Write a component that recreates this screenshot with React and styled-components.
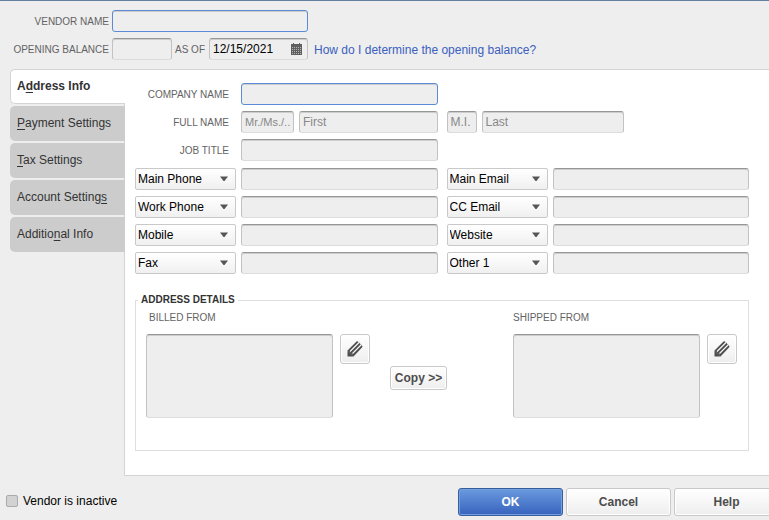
import React, { Component } from 'react'
import styled, { createGlobalStyle, css } from 'styled-components'

const Color = {
  window: '#eeeeee',
  panel: '#ffffff',
  tab: '#cccccc',
  line: '#d4d4d4',
  label: '#636363',
  text: '#000000',
  dark: '#333333',
  focus: '#5b8bd6',
  link: '#3a60c0',
}

const GlobalStyle = createGlobalStyle`
  * {
    box-sizing: border-box;
  }
  body {
    margin: 0;
    overflow-x: hidden;
    background: ${Color.window};
  }
  body, button, input, select, textarea {
    font-family: "Liberation Sans", Arial, sans-serif;
    font-size: 12px;
  }
`

const Window = styled.form`
  min-height: 100vh;
  display: flex;
  flex-direction: column;
  border-top: 1px solid #64809e;
  color: ${Color.text};
`

const Header = styled.header`
  display: flex;
  flex-direction: column;
  gap: 6px;
  padding: 9px 0;
`

const HeaderRow = styled.div`
  display: flex;
  align-items: center;
  gap: 3px;
`

const Label = styled.label`
  flex: none;
  width: ${props => props.$width || 'auto'};
  padding-top: 2px;
  padding-right: ${props => props.$gap || '0'};
  font-size: 10px;
  line-height: 14px;
  text-align: right;
  white-space: nowrap;
  color: ${Color.label};
`

const sunken = css`
  min-width: 0;
  border: 1px solid #c2c2c2;
  border-top-color: #969696;
  border-bottom-color: #dcdcdc;
  border-radius: 3px;
  background: ${Color.window};
  box-shadow: inset 0 1px 0 #cdcdcd;
  outline: none;
`

const Field = styled.input`
  ${sunken}
  height: 22px;
  padding: 0 3px;
  flex: ${props => (props.$width ? 'none' : '1')};
  width: ${props => props.$width || '0'};
  ${props => props.$active && css`
    border-color: ${Color.focus};
  `}
  ${props => props.$small && css`
    font-size: 11px;
  `}
  &::placeholder {
    color: #888888;
    opacity: 1;
  }
`

const DateBox = styled.div`
  ${sunken}
  width: 99px;
  height: 22px;
  margin-left: 1px;
  display: flex;
  align-items: center;
  justify-content: space-between;
  padding: 0 5px 0 3px;
  input {
    width: 70px;
    padding: 0;
    border: 0;
    background: none;
    outline: none;
  }
  button {
    display: flex;
    padding: 0;
    border: 0;
    background: none;
  }
`

const HelpLink = styled.a`
  margin-left: 3px;
  padding-top: 1px;
  color: ${Color.link};
  text-decoration: none;
`

const Body = styled.div`
  display: flex;
`

const Tabs = styled.div`
  flex: none;
  width: 124px;
  padding-left: 10px;
  display: flex;
  flex-direction: column;
  gap: 2px;
`

const Tab = styled.button`
  position: relative;
  height: 35px;
  margin-right: -1px;
  padding: 0 0 1px 7px;
  border: 0;
  border-radius: 5px 0 0 5px;
  background: ${Color.tab};
  color: ${Color.dark};
  text-align: left;
  u {
    text-underline-offset: 2px;
  }
  &[aria-selected='true'] {
    border: 1px solid ${Color.line};
    border-right: 0;
    padding-left: 6px;
    background: ${Color.panel};
    font-weight: bold;
  }
`

const Panel = styled.section`
  flex: 1;
  min-width: 0;
  padding: 13px 20px 24px 10px;
  border: 1px solid ${Color.line};
  border-right: 0;
  background: ${Color.panel};
`

const FormGrid = styled.div`
  display: grid;
  grid-template-columns: minmax(0, 1fr) minmax(0, 1fr);
  gap: 6px 9px;
  margin-bottom: ${props => props.$after || '0'};
`

const Pair = styled.div`
  display: flex;
  align-items: center;
  gap: 5px;
  grid-column: ${props => props.$column || 'auto'};
`

const SelectBox = styled.div`
  flex: none;
  width: 101px;
  height: 22px;
  display: grid;
  align-items: center;
  border: 1px solid #c9c9c9;
  border-radius: 2px;
  background: linear-gradient(#ffffff, #f0f0f0);
  select, svg {
    grid-area: 1 / 1;
  }
  select {
    width: 100%;
    height: 20px;
    padding: 0 0 0 2px;
    appearance: none;
    border: 0;
    background: none;
    color: ${Color.text};
    outline: none;
  }
  svg {
    justify-self: end;
    margin-right: 6px;
    pointer-events: none;
  }
`

const AddressDetails = styled.fieldset`
  min-width: 0;
  margin: 0;
  padding: 2px 11px 32px 10px;
  border: 1px solid #dedede;
  legend {
    margin-left: -8px;
    padding: 0 3px;
    font-size: 10px;
    line-height: 14px;
    font-weight: bold;
    color: ${Color.dark};
  }
`

const AddressRow = styled.div`
  display: flex;
  align-items: flex-end;
`

const Address = styled.div`
  display: grid;
  grid-template-columns: 187px 30px;
  gap: 9px 7px;
  margin-left: ${props => (props.$end ? 'auto' : '0')};
  label {
    grid-column: 1 / 3;
    padding-left: ${props => (props.$end ? '0' : '3px')};
    text-align: left;
  }
`

const AddressText = styled.textarea`
  ${sunken}
  display: block;
  height: 84px;
  resize: none;
`

const Button = styled.button`
  height: ${props => props.$height || '28px'};
  width: ${props => props.$width || '105px'};
  flex: none;
  padding: 0;
  display: flex;
  align-items: center;
  justify-content: center;
  border: 1px solid #c9c9c9;
  border-radius: 3px;
  background: linear-gradient(#ffffff, #eeeeee);
  box-shadow: inset 0 0 0 1px #ffffff;
  color: #4d4d4d;
  font-weight: bold;
  ${props => props.$primary && css`
    border-color: #375f9e;
    background: linear-gradient(#6a9ade, #3763be);
    box-shadow: inset 0 0 0 1px #719fe0;
    color: #ffffff;
  `}
`

const CopyButton = styled(Button)`
  margin: 0 20px 28px;
`

const Footer = styled.footer`
  display: flex;
  align-items: center;
  gap: 3px;
  padding: 12px 0 4px 6px;
  overflow: hidden;
`

const Inactive = styled.label`
  display: flex;
  align-items: center;
  gap: 5px;
  margin: 0 auto 3px 0;
  input {
    appearance: none;
    width: 12px;
    height: 12px;
    margin: 0;
    border: 1px solid #aaaaaa;
    border-radius: 2px;
    background: #d2d2d2;
  }
`

const Actions = styled.div`
  display: flex;
  gap: 3px;
  margin-right: -10px;
`

const CalendarIcon = () => (
  <svg width="11" height="12" viewBox="0 0 11 12" shapeRendering="crispEdges" aria-hidden="true">
    <path d="M0 1h2V0h1v1h5V0h1v1h2v11H0z" fill="#606060" />
    {[4, 6, 8, 10].map(y => (
      <path key={y} d={`M1 ${y}h1v1h-1zM3 ${y}h1v1h-1zM5 ${y}h1v1h-1zM7 ${y}h1v1h-1zM9 ${y}h1v1h-1z`} fill="#b4b4b4" />
    ))}
  </svg>
)

const ArrowIcon = () => (
  <svg width="10" height="6" viewBox="0 0 10 6" aria-hidden="true">
    <path d="M1 .5h8L5.500 5h-1z" fill="#555" />
  </svg>
)

const PencilIcon = () => (
  <svg width="16" height="16" viewBox="0 0 16 16" aria-hidden="true">
    <path d="M.5 15.500V9.500L9.500 .5Q10.500 0 11.500 1L15 4.500Q16 5.500 15 6.500L6.500 15.500z" fill="#4e4e4e" />
    <path d="M3 10.500L12 1.500M5.500 12.500L14.500 3.500" stroke="#f8f8f8" strokeWidth="1.200" />
    <path d="M1.500 10.500l4.500 4" stroke="#777" strokeWidth=".8" fill="none" />
  </svg>
)

const contacts = [
  ['Main Phone', 'Main Email'],
  ['Work Phone', 'CC Email'],
  ['Mobile', 'Website'],
  ['Fax', 'Other 1'],
]

const tabs = [
  ['A', 'd', 'dress Info'],
  ['', 'P', 'ayment Settings'],
  ['', 'T', 'ax Settings'],
  ['Account Setting', 's', ''],
  ['Additio', 'n', 'al Info'],
]

const ContactField = ({ name }) => (
  <Pair>
    <SelectBox>
      <select aria-label={`${name} type`} defaultValue={name}>
        {contacts.flat().map(option => <option key={option}>{option}</option>)}
      </select>
      <ArrowIcon />
    </SelectBox>
    <Field aria-label={name} />
  </Pair>
)

const AddressField = ({ id, title, end }) => (
  <Address $end={end}>
    <Label htmlFor={id}>{title}</Label>
    <AddressText id={id} />
    <Button type="button" $width="30px" $height="30px" aria-label={`Edit ${title}`}>
      <PencilIcon />
    </Button>
  </Address>
)

class App extends Component {
  state = { tab: 0 }

  render() {
    return (
      <Window onSubmit={e => e.preventDefault()}>
        <GlobalStyle />
        <Header>
          <HeaderRow>
            <Label htmlFor="vendor" $width="109px">VENDOR NAME</Label>
            <Field id="vendor" $width="196px" $active />
          </HeaderRow>
          <HeaderRow>
            <Label htmlFor="balance" $width="109px">OPENING BALANCE</Label>
            <Field id="balance" $width="60px" />
            <Label htmlFor="asof">AS OF</Label>
            <DateBox>
              <input id="asof" defaultValue="12/15/2021" />
              <button type="button" aria-label="Pick a date"><CalendarIcon /></button>
            </DateBox>
            <HelpLink href="#help">How do I determine the opening balance?</HelpLink>
          </HeaderRow>
        </Header>
        <Body>
          <Tabs role="tablist">
            {tabs.map(([before, key, after], i) => (
              <Tab
                key={i}
                type="button"
                role="tab"
                aria-selected={this.state.tab === i}
                onClick={() => this.setState({ tab: i })}
              >
                {before}<u>{key}</u>{after}
              </Tab>
            ))}
          </Tabs>
          <Panel>
            <FormGrid $after="7px">
              <Pair $column="1">
                <Label htmlFor="company" $width="101px" $gap="7px">COMPANY NAME</Label>
                <Field id="company" $active />
              </Pair>
              <Pair $column="1">
                <Label htmlFor="title" $width="101px" $gap="7px">FULL NAME</Label>
                <Field id="title" $width="53px" $small placeholder="Mr./Ms./.." />
                <Field aria-label="First name" placeholder="First" />
              </Pair>
              <Pair $column="2">
                <Field aria-label="Middle initial" $width="30px" placeholder="M.I." />
                <Field aria-label="Last name" $width="142px" placeholder="Last" />
              </Pair>
              <Pair $column="1">
                <Label htmlFor="job" $width="101px" $gap="7px">JOB TITLE</Label>
                <Field id="job" />
              </Pair>
            </FormGrid>
            <FormGrid $after="19px">
              {contacts.flat().map(name => <ContactField key={name} name={name} />)}
            </FormGrid>
            <AddressDetails>
              <legend>ADDRESS DETAILS</legend>
              <AddressRow>
                <AddressField id="billed" title="BILLED FROM" />
                <CopyButton type="button" $width="57px" $height="24px">Copy &gt;&gt;</CopyButton>
                <AddressField id="shipped" title="SHIPPED FROM" end />
              </AddressRow>
            </AddressDetails>
          </Panel>
        </Body>
        <Footer>
          <Inactive>
            <input type="checkbox" />
            Vendor is inactive
          </Inactive>
          <Actions>
            <Button type="submit" $primary>OK</Button>
            <Button type="button">Cancel</Button>
            <Button type="button">Help</Button>
          </Actions>
        </Footer>
      </Window>
    )
  }
}

export default App
